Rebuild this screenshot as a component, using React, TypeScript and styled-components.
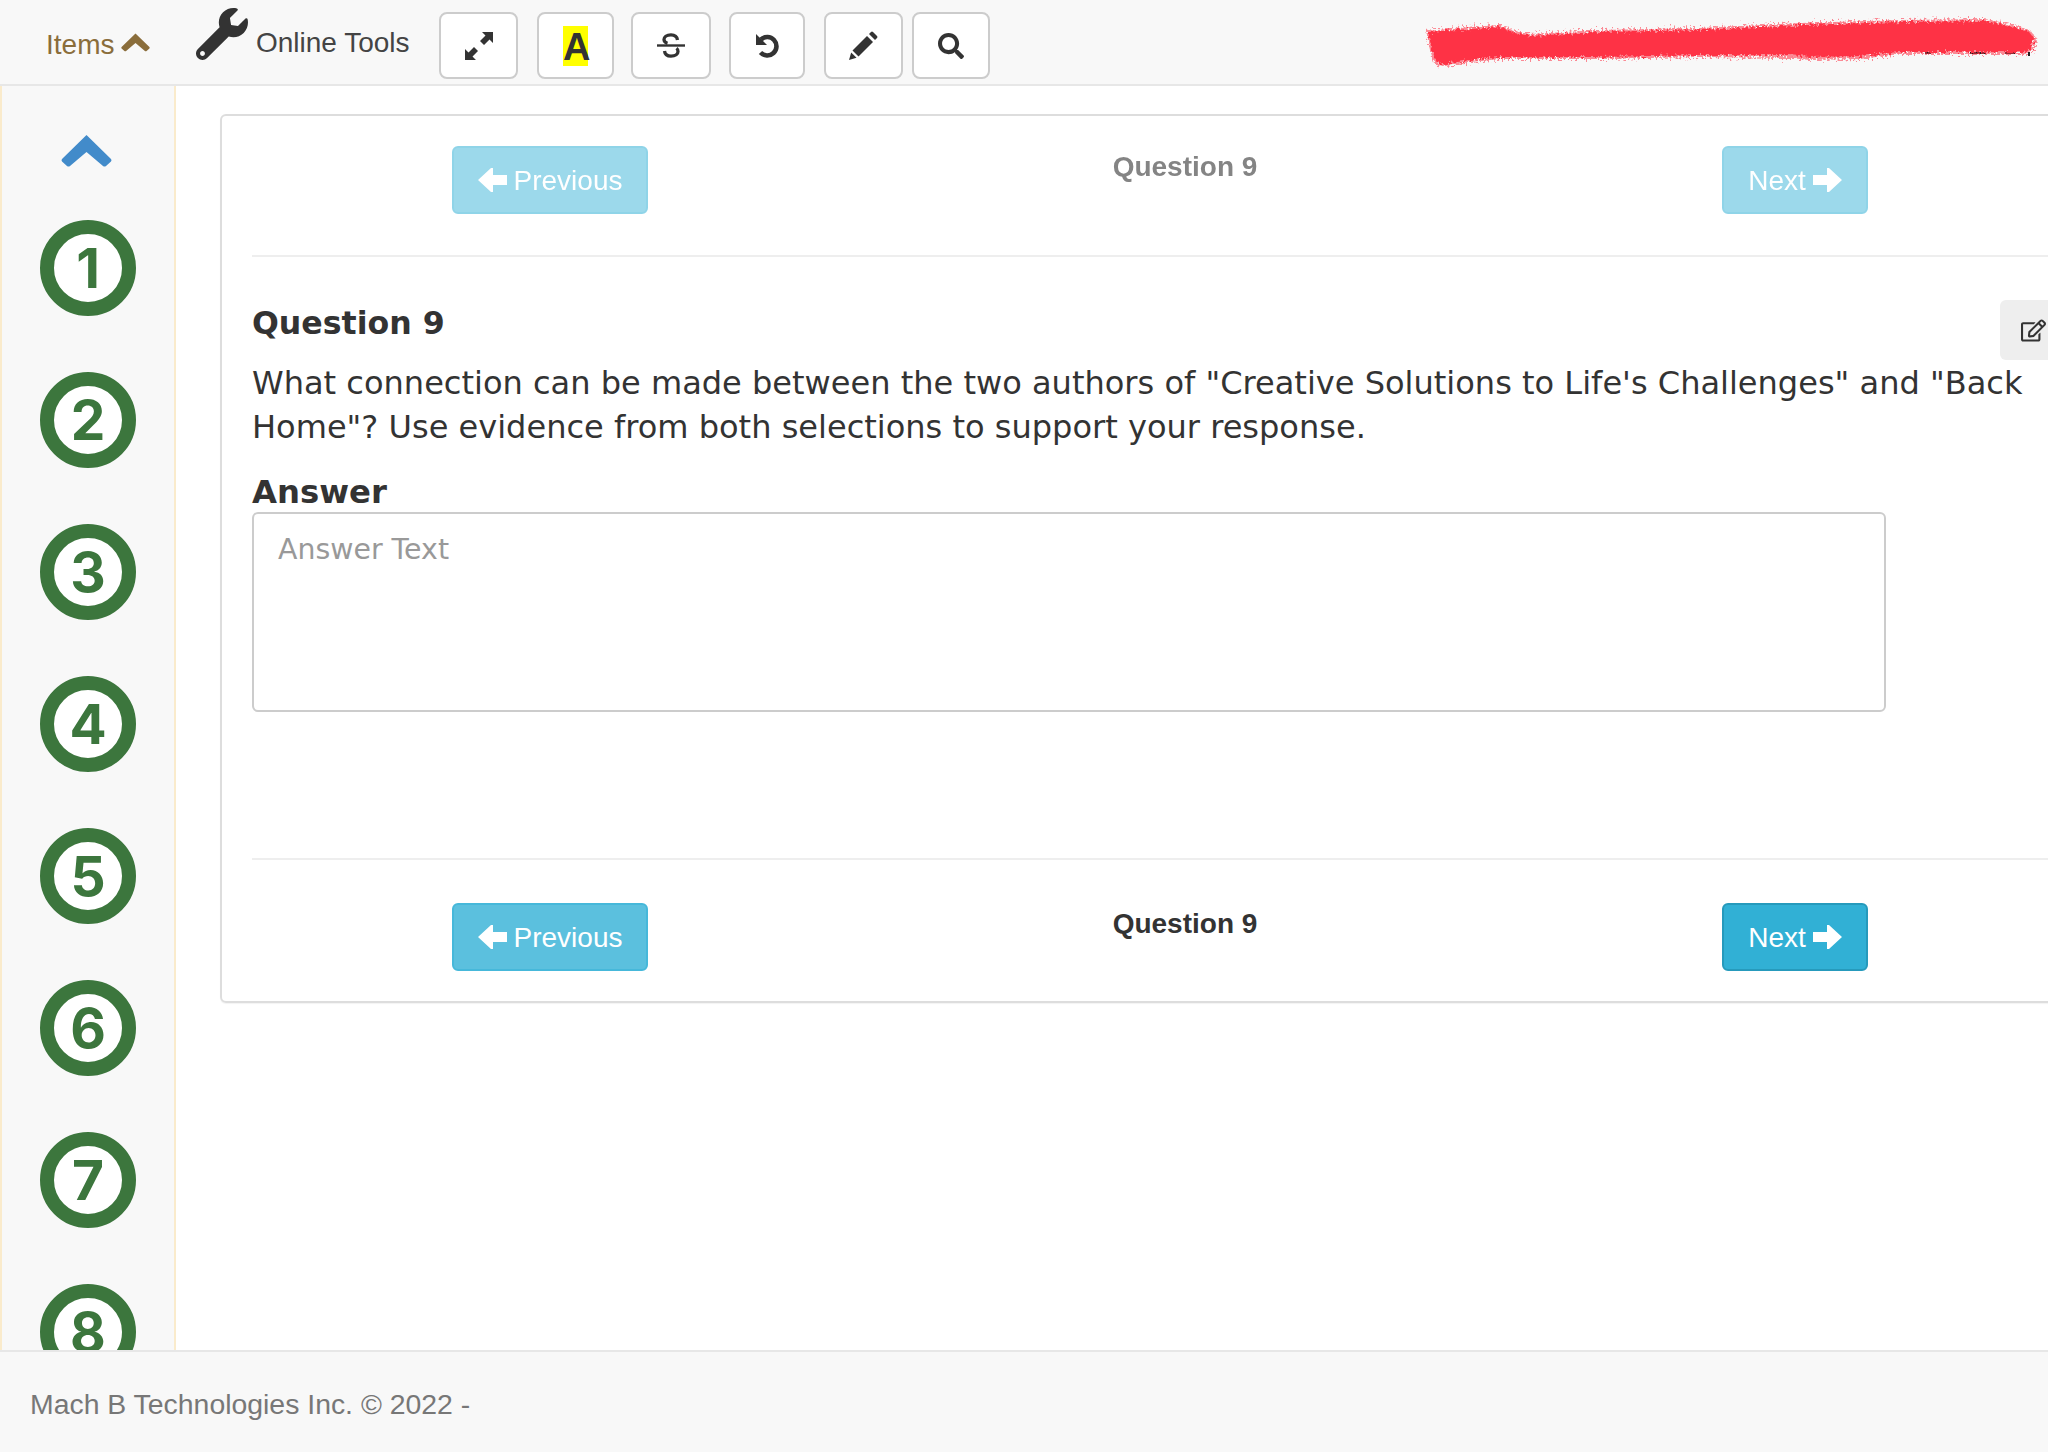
import { FaRegEdit, FaSearch, FaWrench } from "react-icons/fa";
import styled, { createGlobalStyle } from "styled-components";

const GlobalStyle = createGlobalStyle`
  html, body {
    margin: 0;
    padding: 0;
    background: #fff;
  }
  * {
    box-sizing: border-box;
  }
`;

const Page = styled.div`
  width: 2048px;
  height: 1452px;
  display: flex;
  flex-direction: column;
  overflow: hidden;
  font-family: "Liberation Sans", Arial, sans-serif;
  color: #333;
`;

const TopBar = styled.header`
  height: 86px;
  flex-shrink: 0;
  display: flex;
  align-items: flex-start;
  background: #f8f8f8;
  border-bottom: 2px solid #e7e7e7;
  padding-left: 46px;
`;

const ItemsToggle = styled.div`
  display: flex;
  align-items: center;
  gap: 7px;
  width: 150px;
  height: 84px;
  padding-top: 5px;
  color: #8a6d3b;
  font-size: 28px;
  svg {
    margin-top: -5px;
  }
`;

const ToolsLabel = styled.div`
  display: flex;
  align-items: flex-start;
  gap: 8px;
  width: 243px;
  font-size: 28px;
  color: #444;
  svg {
    margin-top: 8px;
    color: #333;
  }
  span {
    margin-top: 27px;
  }
`;

const ToolRow = styled.div`
  display: flex;
  margin-top: 12px;
`;

const ToolButton = styled.button<{ $w: number; $after: number }>`
  width: ${(p) => p.$w}px;
  height: 67px;
  margin-right: ${(p) => p.$after}px;
  display: flex;
  align-items: center;
  justify-content: center;
  padding: 0;
  background: #fff;
  border: 2px solid #ccc;
  border-radius: 8px;
  color: #333;
  font-family: "Liberation Sans", Arial, sans-serif;
`;

const Highlight = styled.span`
  display: block;
  width: 25px;
  height: 40px;
  background: #ff0;
  font-size: 38px;
  font-weight: bold;
  line-height: 43px;
  text-align: center;
`;

const Scribble = styled.svg`
  position: absolute;
  left: 1416px;
  top: 8px;
`;

const Body = styled.div`
  flex: 1;
  display: flex;
  min-height: 0;
`;

const SideNav = styled.nav`
  width: 176px;
  flex-shrink: 0;
  display: flex;
  flex-direction: column;
  align-items: center;
  gap: 56px;
  padding-top: 49px;
  overflow: hidden;
  background: #f8f8f8;
  border-left: 2px solid #faebcc;
  border-right: 2px solid #faebcc;
  > svg {
    flex-shrink: 0;
    margin: 0 3px -3px 0;
  }
`;

const ItemCircle = styled.div`
  width: 96px;
  height: 96px;
  flex-shrink: 0;
  display: flex;
  align-items: center;
  justify-content: center;
  border: 14px solid #3c763d;
  border-radius: 50%;
  background: #fff;
  color: #3c763d;
  font-family: Inter, "Liberation Sans", sans-serif;
  font-size: 55px;
  font-weight: 700;
  line-height: 1;
`;

const Main = styled.main`
  flex: 1;
  min-width: 0;
  position: relative;
  overflow: hidden;
  padding: 28px 0 0 44px;
`;

const Card = styled.section`
  width: 2100px;
  height: 889px;
  padding: 30px 30px 0;
  border: 2px solid #ddd;
  border-radius: 6px;
  box-shadow: 0 1px 1px rgba(0, 0, 0, 0.05);
`;

const NavRow = styled.div<{ $faded?: boolean }>`
  display: grid;
  grid-template-columns: 196px 1074px 146px;
  padding-left: 200px;
  height: 68px;
  opacity: ${(p) => (p.$faded ? 0.6 : 1)};
`;

const RowTitle = styled.div`
  text-align: center;
  font-size: 28px;
  font-weight: bold;
  line-height: 42px;
`;

const NavButton = styled.button<{ $dark?: boolean }>`
  height: 68px;
  display: flex;
  align-items: center;
  justify-content: center;
  gap: 7px;
  padding: 2px 0 0;
  color: #fff;
  font-family: "Liberation Sans", Arial, sans-serif;
  font-size: 28px;
  background: ${(p) => (p.$dark ? "#31b0d5" : "#5bc0de")};
  border: 2px solid ${(p) => (p.$dark ? "#269abc" : "#46b8da")};
  border-radius: 6px;
  svg {
    margin-top: -3px;
  }
`;

const Rule = styled.hr<{ $top?: number; $bottom?: number }>`
  margin: ${(p) => p.$top ?? 0}px 0 ${(p) => p.$bottom ?? 0}px;
  border: 0;
  height: 2px;
  background: #eee;
`;

const Question = styled.div`
  height: 601px;
  padding-top: 46px;
  font-family: "DejaVu Sans", Verdana, sans-serif;
`;

const QuestionTitle = styled.h3`
  margin: 0 0 18px;
  font-size: 31.6px;
  line-height: 40px;
  font-weight: bold;
`;

const QuestionText = styled.p`
  margin: 0;
  width: 1800px;
  font-size: 32.04px;
  line-height: 44px;
`;

const AnswerLabel = styled.label`
  display: block;
  margin-top: 23px;
  font-size: 32.3px;
  line-height: 40px;
  font-weight: bold;
`;

const AnswerBox = styled.textarea`
  display: block;
  width: 1634px;
  height: 200px;
  padding: 17px 24px;
  border: 2px solid #ccc;
  border-radius: 6px;
  resize: none;
  font-family: "DejaVu Sans", Verdana, sans-serif;
  font-size: 28.4px;
  line-height: 38px;
  &::placeholder {
    color: #999;
    opacity: 1;
  }
`;

const NoteTab = styled.div`
  position: absolute;
  right: 0;
  top: 214px;
  width: 48px;
  height: 60px;
  display: flex;
  align-items: center;
  padding-left: 21px;
  background: #eee;
  border-radius: 6px 0 0 6px;
  color: #333;
`;

const FooterBar = styled.footer`
  height: 102px;
  flex-shrink: 0;
  padding: 32px 0 0 30px;
  background: #f8f8f8;
  border-top: 2px solid #e7e7e7;
  color: #777;
  font-size: 28.4px;
  line-height: 40px;
`;

const Chevron = ({ w, h, color }: { w: number; h: number; color: string }) => (
  <svg width={w} height={h} viewBox="0 0 51 32">
    <path
      d="M25.5 0 L50 24 Q51 25 50 26.5 L45 31 Q43.5 32 42 31 L25.5 17 L9 31 Q7.5 32 6 31 L1 26.5 Q0 25 1 24 Z"
      fill={color}
    />
  </svg>
);

const ArrowLeft = () => (
  <svg width="29" height="24" viewBox="0 0 29 24">
    <path d="M0 12 L13 0 L15 0 L15 7 L29 7 L29 17 L15 17 L15 24 L13 24 Z" fill="#fff" />
  </svg>
);

const ArrowRight = () => (
  <svg width="29" height="24" viewBox="0 0 29 24">
    <path d="M29 12 L16 0 L14 0 L14 7 L0 7 L0 17 L14 17 L14 24 L16 24 Z" fill="#fff" />
  </svg>
);

const ResizeIcon = () => (
  <svg width="30" height="30" viewBox="0 0 30 30">
    <path d="M18 1 L29 1 L29 12 L25.5 8.5 L20 14 L16 10 L21.5 4.5 Z" fill="#333" />
    <path d="M12 29 L1 29 L1 18 L4.5 21.5 L10 16 L14 20 L8.5 25.5 Z" fill="#333" />
  </svg>
);

const StrikeIcon = () => (
  <svg width="28" height="25" viewBox="0 0 28 25">
    <path d="M0 12.5 H28" stroke="#333" strokeWidth="2.4" />
    <path d="M20.5 7 C20 3 17 1.8 14 1.8 C9.5 1.8 7 4 7 6.5 C7 8.5 8.5 9.7 10.5 10.3" fill="none" stroke="#333" strokeWidth="3.3" />
    <path d="M7.5 18 C8 22 11 23.2 14 23.2 C18.5 23.2 21 21 21 18.5 C21 17 20.4 16 19.5 15.3" fill="none" stroke="#333" strokeWidth="3.3" />
  </svg>
);

const UndoIcon = () => (
  <svg width="25" height="25" viewBox="0 0 25 25">
    <path d="M6 6.5 A9.2 9.2 0 1 1 5.5 19.5" fill="none" stroke="#333" strokeWidth="4.6" />
    <path d="M1 1 L1 12 L12 12 Z" fill="#333" />
  </svg>
);

const PencilIcon = () => (
  <svg width="29" height="29" viewBox="0 0 29 29">
    <path d="M0 29 L2.2 21.5 L7.5 26.8 Z" fill="#333" />
    <path d="M3.5 19.5 L18 5 L24 11 L9.5 25.5 Z" fill="#333" />
    <path d="M20 3 L22 1 Q23 0 24 1 L28 5 Q29 6 28 7 L26 9 Z" fill="#333" />
  </svg>
);

// the red marker stroke over the user name
const RedStroke = () => (
  <Scribble width="632" height="70" viewBox="1416 8 632 70">
    <defs>
      <filter id="rough" x="-2%" y="-20%" width="104%" height="140%">
        <feTurbulence type="fractalNoise" baseFrequency="0.35" numOctaves="3" seed="4" />
        <feDisplacementMap in="SourceGraphic" scale="8" />
      </filter>
      <filter id="fuzz" x="-2%" y="-30%" width="104%" height="160%">
        <feTurbulence type="fractalNoise" baseFrequency="0.5" numOctaves="2" seed="9" />
        <feDisplacementMap in="SourceGraphic" scale="14" />
      </filter>
    </defs>
    <path
      d="M1850 53 h3 M1925 53 h6 M1970 53 h16 M2005 53 h10 M2029 52 v4"
      stroke="#222"
      strokeWidth="2"
    />
    <path
      d="M1426 31 L1470 27 L1500 25 L1515 31 L1530 34 L1600 30 L1700 28 L1800 23 L1900 20 L1985 19 L2005 23 L2030 30 L2036 38 L2034 49 L2025 54 L1900 54 L1860 59 L1810 60 L1790 58 L1700 57 L1600 59 L1500 59 L1470 62 L1445 66 L1435 65 L1430 50 Z"
      fill="#fe3345"
      opacity="0.55"
      filter="url(#fuzz)"
    />
    <path
      d="M1428 32 L1470 29 L1500 27 L1515 33 L1530 36 L1600 32 L1700 30 L1800 25 L1900 22 L1985 21 L2005 25 L2028 31 L2034 38 L2032 48 L2025 52 L1900 52 L1860 56 L1810 57 L1790 55 L1700 55 L1600 57 L1500 57 L1470 60 L1445 64 L1437 63 L1432 50 Z"
      fill="#fe3345"
      filter="url(#rough)"
    />
  </Scribble>
);

const items = [1, 2, 3, 4, 5, 6, 7, 8];

function PagerRow({ faded, darkNext }: { faded?: boolean; darkNext?: boolean }) {
  return (
    <NavRow $faded={faded}>
      <NavButton>
        <ArrowLeft />
        Previous
      </NavButton>
      <RowTitle>Question 9</RowTitle>
      <NavButton $dark={darkNext}>
        Next
        <ArrowRight />
      </NavButton>
    </NavRow>
  );
}

export default function App() {
  return (
    <Page>
      <GlobalStyle />
      <TopBar>
        <ItemsToggle>
          Items
          <Chevron w={29} h={19} color="#8a6d3b" />
        </ItemsToggle>
        <ToolsLabel>
          <FaWrench size={52} />
          <span>Online Tools</span>
        </ToolsLabel>
        <ToolRow>
          <ToolButton $w={79} $after={19}>
            <ResizeIcon />
          </ToolButton>
          <ToolButton $w={77} $after={17}>
            <Highlight>A</Highlight>
          </ToolButton>
          <ToolButton $w={80} $after={18}>
            <StrikeIcon />
          </ToolButton>
          <ToolButton $w={76} $after={19}>
            <UndoIcon />
          </ToolButton>
          <ToolButton $w={79} $after={9}>
            <PencilIcon />
          </ToolButton>
          <ToolButton $w={78} $after={0}>
            <FaSearch size={26} />
          </ToolButton>
        </ToolRow>
        <RedStroke />
      </TopBar>
      <Body>
        <SideNav>
          <Chevron w={51} h={32} color="#428bca" />
          {items.map((n) => (
            <ItemCircle key={n}>{n}</ItemCircle>
          ))}
        </SideNav>
        <Main>
          <Card>
            <PagerRow faded />
            <Rule $top={41} />
            <Question>
              <QuestionTitle>Question 9</QuestionTitle>
              <QuestionText>
                What connection can be made between the two authors of "Creative Solutions to Life's Challenges" and "Back Home"? Use evidence from both selections to support your response.
              </QuestionText>
              <AnswerLabel>Answer</AnswerLabel>
              <AnswerBox placeholder="Answer Text" />
            </Question>
            <Rule $bottom={43} />
            <PagerRow darkNext />
          </Card>
          <NoteTab>
            <FaRegEdit size={25} />
          </NoteTab>
        </Main>
      </Body>
      <FooterBar>Mach B Technologies Inc. © 2022 -</FooterBar>
    </Page>
  );
}
